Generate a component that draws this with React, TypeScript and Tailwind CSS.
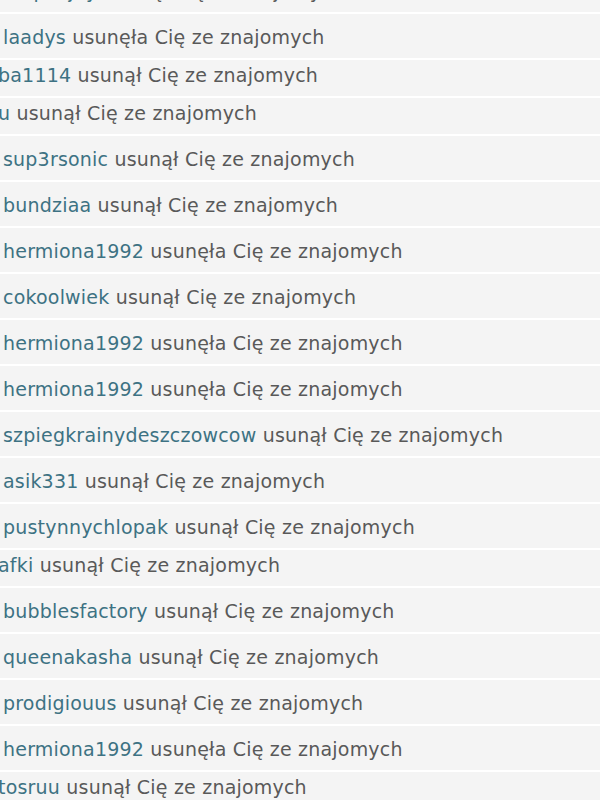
type Removal = {
  user: string;
  verb: "usunął" | "usunęła";
  compact?: boolean;
};

const removals: Removal[] = [
  { user: "kropkajay", verb: "usunął" },
  { user: "laadys", verb: "usunęła" },
  { user: "ba1114", verb: "usunął", compact: true },
  { user: "u", verb: "usunął", compact: true },
  { user: "sup3rsonic", verb: "usunął" },
  { user: "bundziaa", verb: "usunął" },
  { user: "hermiona1992", verb: "usunęła" },
  { user: "cokoolwiek", verb: "usunął" },
  { user: "hermiona1992", verb: "usunęła" },
  { user: "hermiona1992", verb: "usunęła" },
  { user: "szpiegkrainydeszczowcow", verb: "usunął" },
  { user: "asik331", verb: "usunął" },
  { user: "pustynnychlopak", verb: "usunął" },
  { user: "afki", verb: "usunął", compact: true },
  { user: "bubblesfactory", verb: "usunął" },
  { user: "queenakasha", verb: "usunął" },
  { user: "prodigiouus", verb: "usunął" },
  { user: "hermiona1992", verb: "usunęła" },
  { user: "tosruu", verb: "usunął", compact: true },
];

function RemovalRow({ user, verb, compact }: Removal) {
  return (
    <li
      className={
        compact
          ? "h-[38px] border-t-2 border-white pt-[4px] pl-0 -ml-[2px] whitespace-nowrap"
          : "h-[46px] border-t-2 border-white pt-[12px] pl-[3px] whitespace-nowrap"
      }
    >
      <a href="#" className="text-[#3d7283]">
        {user}
      </a>{" "}
      <span>{verb} Cię ze znajomych</span>
    </li>
  );
}

export default function App() {
  return (
    <div className="h-[800px] w-[600px] overflow-hidden bg-[#f4f4f4] font-['DejaVu_Sans',sans-serif] text-[19px] leading-[22px] tracking-[0.2px] text-[#595959]">
      <ul className="-mt-[34px]">
        {removals.map((r, i) => (
          <RemovalRow key={i} {...r} />
        ))}
      </ul>
    </div>
  );
}
